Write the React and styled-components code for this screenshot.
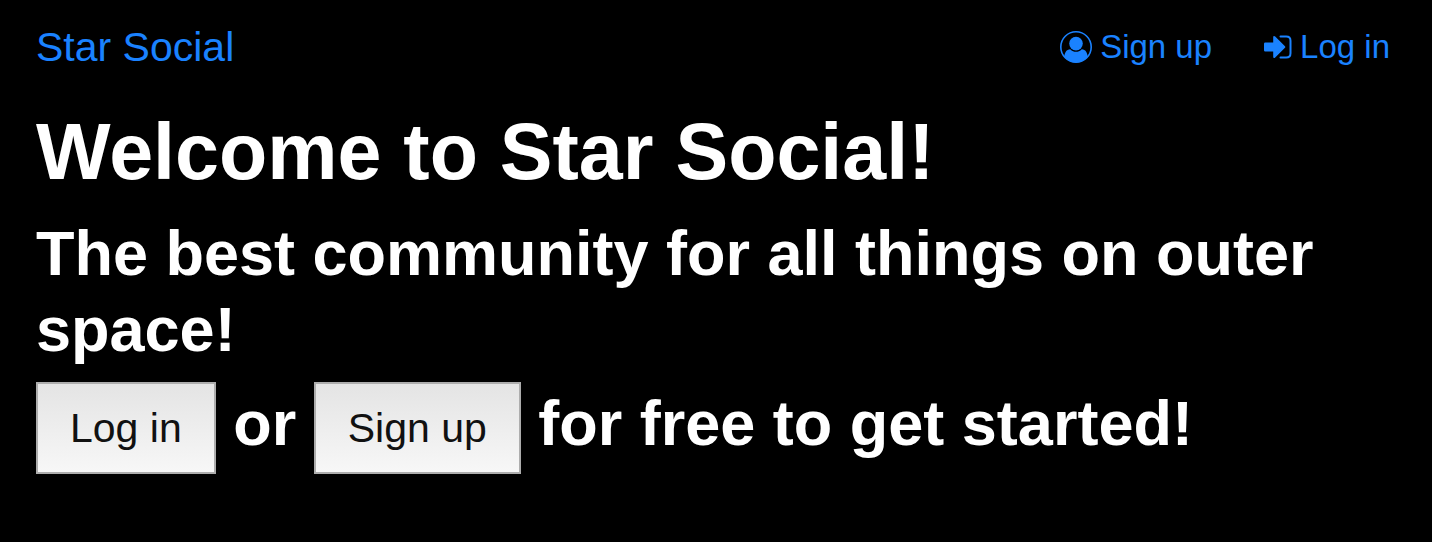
import React from "react";
import styled, { createGlobalStyle } from "styled-components";

const Global = createGlobalStyle`
  *, *::before, *::after { box-sizing: border-box; }
  body {
    margin: 0;
    background: #000;
    color: #fff;
    font-family: "Liberation Sans", Helvetica, Arial, sans-serif;
  }
`;

const Page = styled.div`
  min-height: 100vh;
  padding: 16px 36px 32px;
`;

const Navbar = styled.nav`
  display: flex;
  align-items: center;
  justify-content: space-between;
  height: 62px;
`;

const NavLinks = styled.div`
  display: flex;
  gap: 52px;
  padding-right: 6px;
`;

const NavLink = styled.a`
  display: flex;
  align-items: center;
  gap: 8px;
  color: #1a82ff;
  font-size: ${(p) => (p.$brand ? 41 : 33)}px;
  line-height: 60px;
  text-decoration: none;
`;

const Icon = styled.svg`
  width: ${(p) => p.$width}px;
  height: ${(p) => p.$height}px;
  fill: currentColor;
`;

const Title = styled.h1`
  margin: 26px 0 0;
  font-size: 79px;
  line-height: 96px;
`;

const Subtitle = styled.h2`
  margin: 15px 0 0;
  font-size: 63px;
  line-height: 76px;
`;

const Button = styled.button`
  height: 92px;
  padding: 0 32px;
  border: 2px solid #adadad;
  border-radius: 0;
  background: linear-gradient(#e4e4e4, #f7f7f7);
  color: #111;
  font: 41px "Liberation Sans", Helvetica, Arial, sans-serif;
  vertical-align: middle;
`;

function UserIcon() {
  return (
    <Icon $width={32} $height={32} viewBox="0 0 32 32" aria-hidden="true">
      <circle cx="16" cy="16" r="15.200" fill="none" stroke="currentColor" strokeWidth="1.600" />
      <circle cx="16" cy="12.600" r="6.800" />
      <path d="M10.200 18.200C12 20.200 14 20.800 16 20.800S20 20.200 21.800 18.200C25.500 18.400 27.400 21.500 27.800 26A15.500 15.500 0 0 1 4.200 26C4.600 21.500 6.500 18.400 10.200 18.200Z" />
    </Icon>
  );
}

function SignInIcon() {
  return (
    <Icon $width={28} $height={24} viewBox="0 0 28 24" aria-hidden="true">
      <path d="M1.200 7.500H9.200V2.200Q9.200 1 10 1T11.200 1.500L21 11.200Q21.600 12 21 12.800L11.200 22.500Q10.800 23 10 23T9.200 21.800V16.500H1.200Q0 16.500 0 15.300V8.700Q0 7.500 1.200 7.500Z" />
      <path d="M16.500 1.500H22.200Q26.500 1.500 26.500 5.800V18.200Q26.500 22.500 22.200 22.500H16.500" fill="none" stroke="currentColor" strokeWidth="2" strokeLinecap="round" />
    </Icon>
  );
}

export default function App() {
  return (
    <Page>
      <Global />
      <Navbar>
        <NavLink href="#" $brand>Star Social</NavLink>
        <NavLinks>
          <NavLink href="#signup"><UserIcon />Sign up</NavLink>
          <NavLink href="#login"><SignInIcon />Log in</NavLink>
        </NavLinks>
      </Navbar>
      <main>
        <Title>Welcome to Star Social!</Title>
        <Subtitle>The best community for all things on outer space!</Subtitle>
        <Subtitle>
          <Button type="button">Log in</Button>
          {" or "}
          <Button type="button">Sign up</Button>
          {" for free to get started!"}
        </Subtitle>
      </main>
    </Page>
  );
}
